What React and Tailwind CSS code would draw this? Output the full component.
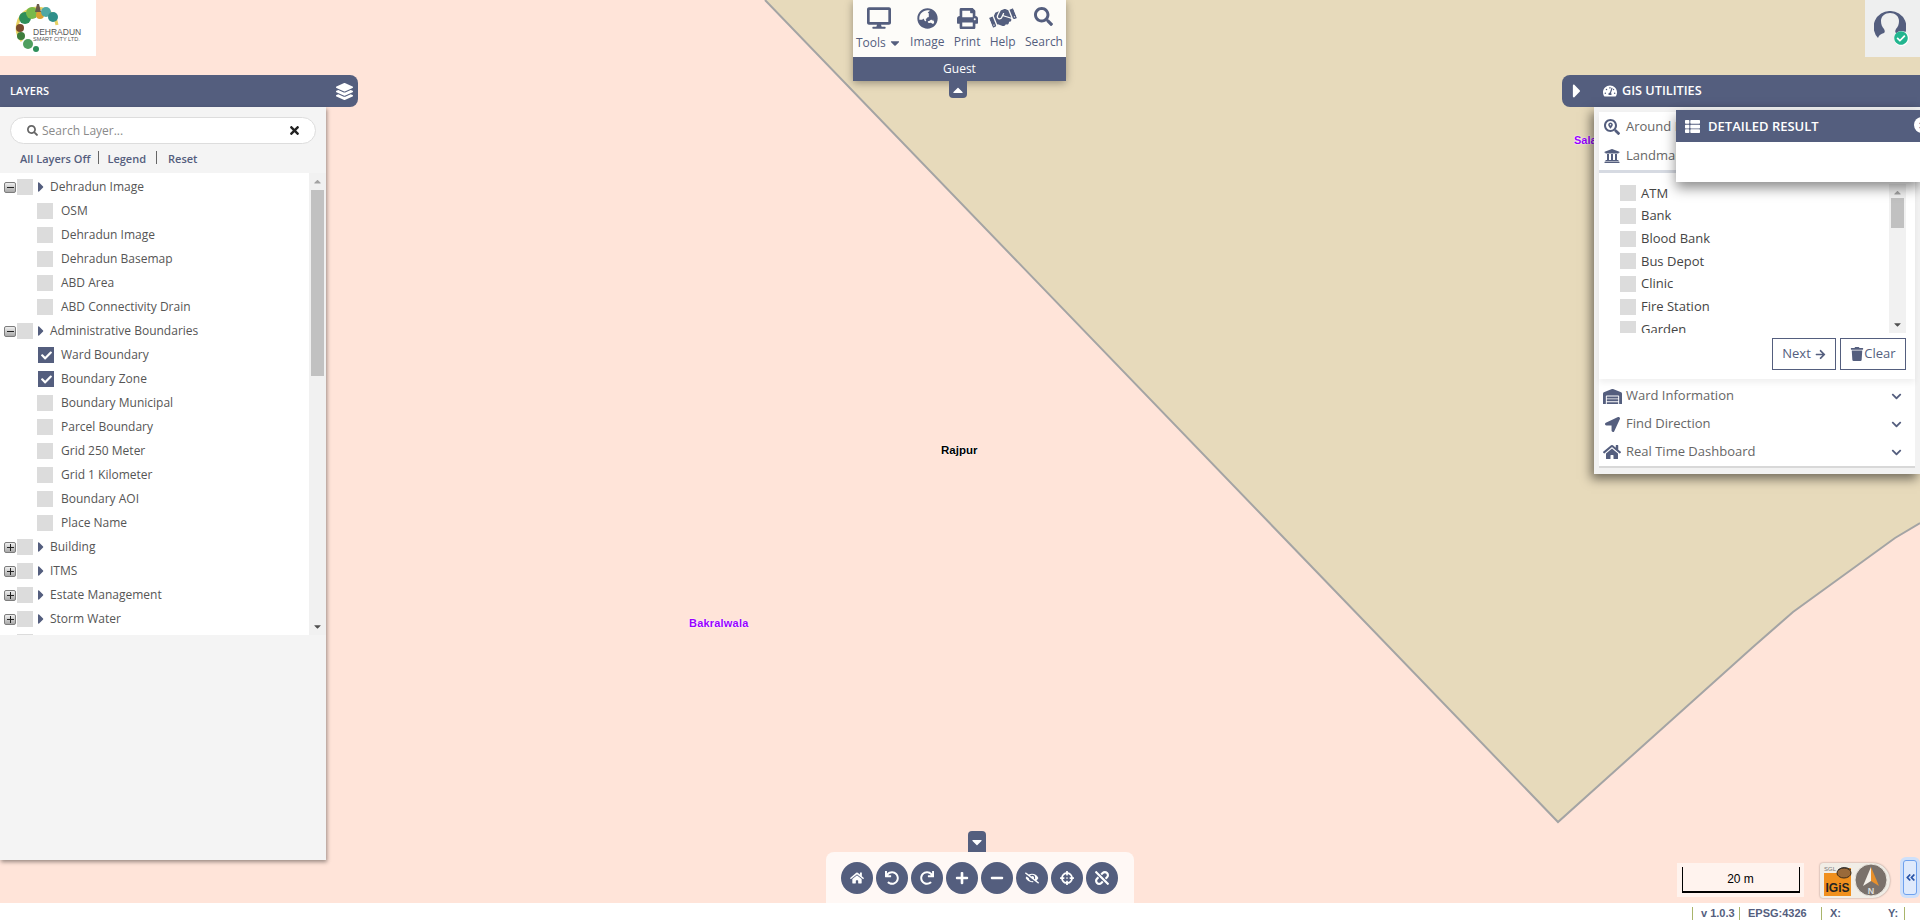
import {
  FaDesktop, FaGlobeAsia, FaPrint, FaHandshake, FaSearch, FaHome, FaUndo, FaRedo, FaPlus, FaMinus,
  FaEyeSlash, FaCrosshairs, FaUnlink, FaTachometerAlt, FaSearchLocation, FaUniversity, FaWarehouse,
  FaLocationArrow, FaArrowRight, FaTrash, FaChevronDown, FaThList, FaLayerGroup, FaCheck,
  FaAngleDoubleLeft, FaCaretRight, FaCaretDown, FaCaretUp, FaTimes, FaCheckCircle,
} from 'react-icons/fa';

const layerTree = [
  { name: 'Dehradun Image', open: true, children: [['OSM'], ['Dehradun Image'], ['Dehradun Basemap'], ['ABD Area'], ['ABD Connectivity Drain']] },
  { name: 'Administrative Boundaries', open: true, children: [['Ward Boundary', true], ['Boundary Zone', true], ['Boundary Municipal'], ['Parcel Boundary'], ['Grid 250 Meter'], ['Grid 1 Kilometer'], ['Boundary AOI'], ['Place Name']] },
  { name: 'Building' },
  { name: 'ITMS' },
  { name: 'Estate Management' },
  { name: 'Storm Water' },
];

const tools = [
  { label: 'Image', icon: FaGlobeAsia, size: 'text-[21px] mt-[8px] mb-[4px]' },
  { label: 'Print', icon: FaPrint, size: 'text-[21px] mt-[8px] mb-[4px]' },
  { label: 'Help', icon: FaHandshake, size: 'text-[26px] mt-[5px] mb-[2px] -rotate-[22deg]' },
  { label: 'Search', icon: FaSearch, size: 'text-[19px] mt-[7px] mb-[7px]' },
];

const mapButtons = [FaHome, FaUndo, FaRedo, FaPlus, FaMinus, FaEyeSlash, FaCrosshairs, FaUnlink];

const landmarks = ['ATM', 'Bank', 'Blood Bank', 'Bus Depot', 'Clinic', 'Fire Station', 'Garden'];

const utilities = [
  { label: 'Ward Information', icon: FaWarehouse, size: 'text-[19px]' },
  { label: 'Find Direction', icon: FaLocationArrow, size: 'text-[15px]' },
  { label: 'Real Time Dashboard', icon: FaHome, size: 'text-[18px]' },
];

function CheckBox({ checked }) {
  if (checked) {
    return (
      <span className="w-4 h-4 ml-px -mr-px bg-[#545e7e] flex items-center justify-center text-white text-[11px] shrink-0">
        <FaCheck />
      </span>
    );
  }
  return <span className="w-4 h-4 bg-[#dcdcdc] shrink-0" />;
}

function ExpandBox({ open }) {
  return (
    <span className="w-3 h-[11px] rounded-[2px] border border-[#7d7d7d] bg-gradient-to-b from-[#efefef] to-[#a9a9a9] flex items-center justify-center relative shrink-0">
      <span className="w-[7px] h-px bg-[#222]" />
      {!open && <span className="absolute w-px h-[7px] bg-[#222]" />}
    </span>
  );
}

function ScrollBar({ thumb }) {
  return (
    <div className="w-[17px] bg-[#f1f1f1] flex flex-col items-center shrink-0 relative">
      <FaCaretUp className="text-[#a3a3a3] text-[11px] mt-[3px] shrink-0" />
      <div className={`w-[13px] bg-[#c1c1c1] ${thumb}`} />
      <FaCaretDown className="text-[#505050] text-[11px] absolute bottom-[3px]" />
    </div>
  );
}

function LayersPanel() {
  return (
    <div className="absolute left-0 top-[75px] w-[358px] h-[785px] flex flex-col">
      <div className="h-8 bg-[#545e7e] rounded-r-lg flex items-center justify-between pl-[10px] pr-[5px] text-white text-[11px] font-semibold shrink-0">
        LAYERS
        <FaLayerGroup className="text-[17px]" />
      </div>
      <div className="w-[326px] grow bg-[#f4f4f4] shadow-[1px_2px_4px_rgba(0,0,0,0.4)] flex flex-col">
        <div className="mx-[10px] mt-[10px] h-[27px] bg-white border border-[#ddd] rounded-full flex items-center pl-4 pr-[14px] text-[12px] text-[#8a8a8a]">
          <FaSearch className="text-[11px] text-[#666] mr-[4px]" />
          <span className="grow">Search Layer...</span>
          <FaTimes className="text-[13px] text-[#222]" />
        </div>
        <div className="h-[29px] pl-5 pt-[1px] flex items-center text-[11px] font-semibold text-[#545e7e]">
          <span>All Layers Off</span>
          <span className="w-px h-[13px] bg-[#666] mx-2 -mt-[3px]" />
          <span>Legend</span>
          <span className="w-px h-[13px] bg-[#666] ml-[10px] mr-[11px] -mt-[3px]" />
          <span>Reset</span>
        </div>
        <div className="h-[462px] bg-white flex overflow-hidden">
          <div className="grow overflow-hidden pt-[2px]">
            {layerTree.map((group) => (
              <div key={group.name}>
                <div className="h-6 flex items-center pl-1 text-[12px] text-[#555]">
                  <ExpandBox open={group.open} />
                  <span className="w-4 h-4 bg-[#dcdcdc] ml-[1px] shrink-0" />
                  <FaCaretRight className="text-[#545e7e] text-[16px] mr-px shrink-0" />
                  <span className="whitespace-nowrap">{group.name}</span>
                </div>
                {group.children?.map(([name, checked]) => (
                  <div key={name} className="h-6 flex items-center pl-[37px] text-[12px] text-[#555]">
                    <CheckBox checked={checked} />
                    <span className="ml-2 whitespace-nowrap">{name}</span>
                  </div>
                ))}
              </div>
            ))}
            <div className="h-[22px] flex items-center pl-[4px]">
              <ExpandBox />
              <span className="w-4 h-4 bg-[#dcdcdc] ml-[1px]" />
            </div>
          </div>
          <ScrollBar thumb="h-[186px] mt-[3px]" />
        </div>
      </div>
    </div>
  );
}

function TopToolbar() {
  return (
    <div className="absolute left-[853px] top-0 w-[213px] flex flex-col items-start">
      <div className="w-full shadow-[0_2px_8px_rgba(0,0,0,0.35)]">
        <div className="h-[57px] bg-[#fdfcf9] flex justify-between pl-[3px] pr-[3px] text-[12px] text-[#545e7e]">
          <div className="flex flex-col items-center -mr-[1px]">
            <FaDesktop className="text-[24px] mt-[6px] mb-[4px]" />
            <span className="flex items-center gap-[2px] leading-[17px]">Tools <FaCaretDown className="text-[14px]" /></span>
          </div>
          {tools.map(({ label, icon: Icon, size }) => (
            <div key={label} className="flex flex-col items-center">
              <Icon className={size} />
              <span className="leading-[17px]">{label}</span>
            </div>
          ))}
        </div>
        <div className="h-6 bg-[#545e7e] text-white text-[12px] flex items-center justify-center">Guest</div>
      </div>
      <div className="ml-[96px] w-[18px] h-[17px] bg-[#545e7e] rounded-b-[4px] flex items-center justify-center text-white text-[16px]">
        <FaCaretUp />
      </div>
    </div>
  );
}

function UtilityRow({ icon: Icon, label, arrow, size = 'text-[16px]', height = 'h-7' }) {
  return (
    <div className={`${height} flex items-center pl-[3px] pr-[13px] text-[13px] text-[#666]`}>
      <span className="w-5 flex items-center justify-center shrink-0 text-[#545e7e]">
        <Icon className={size} />
      </span>
      <span className="ml-[4px] grow whitespace-nowrap">{label}</span>
      {arrow && <FaChevronDown className="text-[#545e7e] text-[11px]" />}
    </div>
  );
}

function UtilitiesPanel() {
  return (
    <div className="absolute right-0 top-[75px] w-[358px] flex flex-col">
      <div className="h-8 bg-[#545e7e] rounded-l-lg flex items-center pl-[4px] text-white text-[12.7px] font-semibold shrink-0">
        <FaCaretRight className="text-[22px] mr-[15px]" />
        <FaTachometerAlt className="text-[14px] mr-[5px]" />
        GIS UTILITIES
      </div>
      <div className="ml-8 bg-[#f2f2f2] px-[5px] pt-[5px] pb-[6px] shadow-[-3px_5px_10px_rgba(0,0,0,0.5)]">
        <div className="bg-white">
          <div className="shadow-[0_4px_6px_rgba(0,0,0,0.06)]">
            <UtilityRow icon={FaSearchLocation} label="Around Me" height="h-[29px]" />
            <UtilityRow icon={FaUniversity} label="Landmark" height="h-[29px]" />
            <div className="h-[3px] bg-[#d6dae2]" />
            <div className="flex h-[149px] mt-[11px] pl-[21px] pr-[9px]">
              <div className="grow -mt-[2px] overflow-hidden text-[13px] text-[#444]">
                {landmarks.map((name) => (
                  <div key={name} className="h-[22.7px] flex items-center">
                    <CheckBox />
                    <span className="ml-[5px]">{name}</span>
                  </div>
                ))}
              </div>
              <ScrollBar thumb="h-[30px]" />
            </div>
            <div className="flex justify-end gap-1 pr-[9px] pt-[5px] pb-[9px] text-[13px] text-[#545e7e]">
              <button className="w-16 h-8 border border-[#545e7e] flex items-center justify-center gap-1">
                Next <FaArrowRight className="text-[11px]" />
              </button>
              <button className="w-[66px] h-8 border border-[#545e7e] flex items-center justify-center">
                <FaTrash className="text-[14px]" />Clear
              </button>
            </div>
          </div>
          <div className="pt-[3px]">
            {utilities.map((item) => (
              <UtilityRow key={item.label} icon={item.icon} label={item.label} size={item.size} arrow />
            ))}
          </div>
          <div className="h-[2px] bg-[#d8d8d8]" />
        </div>
      </div>
    </div>
  );
}

function DetailedResult() {
  return (
    <div className="absolute right-0 top-[110px] w-[244px] h-[72px] bg-white shadow-[0_6px_12px_rgba(0,0,0,0.45)]">
      <div className="h-8 bg-[#545e7e] flex items-center pl-[9px] pt-[1px] text-white text-[13px] font-semibold relative overflow-hidden">
        <FaThList className="text-[15px] mr-[8px]" />
        DETAILED RESULT
        <span className="absolute -right-[10px] top-[7px] w-4 h-4 rounded-full bg-white flex items-center justify-center text-[#8a4a4a] text-[9px]">
          <FaTimes />
        </span>
      </div>
    </div>
  );
}

function BottomToolbar() {
  return (
    <div className="absolute left-[826px] bottom-0 w-[308px] flex flex-col items-start">
      <div className="ml-[142px] w-[18px] h-[21px] bg-[#545e7e] rounded-t-[4px] flex items-center justify-center text-white text-[16px]">
        <FaCaretDown />
      </div>
      <div className="w-full h-[51px] bg-[#fff8f5] rounded-t-lg flex items-start justify-center gap-[3.15px] pt-[10px] pr-[1px]">
        {mapButtons.map((Icon, i) => (
          <span key={i} className="w-8 h-8 rounded-full bg-[#545e7e] text-white text-[14px] flex items-center justify-center">
            <Icon />
          </span>
        ))}
      </div>
    </div>
  );
}

function CompassLogo() {
  return (
    <div className="absolute left-[1820px] top-[863px] w-[70px] h-[35px] rounded-l-[3px] rounded-r-[18px] bg-[#f1ede6] shadow-[0_0_2px_rgba(0,0,0,0.4)] flex items-center">
      <svg width="30" height="17" viewBox="0 0 30 17" className="absolute left-[3px] top-[2px]">
        <rect x="1" y="8" width="27" height="9" fill="#f0901e" />
        <rect x="17" y="3" width="11" height="6" fill="#f0901e" />
        <ellipse cx="21" cy="8" rx="7" ry="5" fill="#9a6a3a" stroke="#3b2a1a" />
        <path d="M15 5 Q21 0 28 5" fill="none" stroke="#333" />
      </svg>
      <span className="absolute left-[4px] top-[3px] text-[6px] leading-none text-[#777] font-['Liberation_Sans',sans-serif]">SGL</span>
      <div className="absolute left-[4px] top-[17px] w-[27px] h-4 bg-[#f0901e] text-[12px] font-bold leading-4 text-[#222] font-['Liberation_Sans',sans-serif] text-center">IGiS</div>
      <svg width="34" height="34" viewBox="0 0 34 34" className="absolute left-[34px] top-0">
        <circle cx="17" cy="17" r="16" fill="#7a716b" stroke="#e9e5de" />
        <path d="M17 4 L25 23 L17 18 Z" fill="#e8902b" />
        <path d="M17 4 L9 23 L17 18 Z" fill="#f4f0ea" />
        <text x="17" y="31" textAnchor="middle" fontSize="9" fontWeight="700" fill="#ddd" fontFamily="Liberation Sans">N</text>
      </svg>
    </div>
  );
}

function DscLogo() {
  return (
    <div className="absolute left-0 top-0 w-24 h-14 bg-white flex items-center pl-[15px]">
      <svg width="48" height="50" viewBox="0 0 48 50" className="shrink-0 -mr-[30px]">
        <path d="M7 38 A20 20 0 1 1 42 22" fill="none" stroke="#e8d263" strokeWidth="3" />
        <circle cx="10" cy="15" r="6" fill="#2e8f5a" />
        <circle cx="17" cy="10" r="6" fill="#79b94a" />
        <circle cx="25" cy="12" r="4" fill="#d9a030" />
        <circle cx="31" cy="9" r="5" fill="#4fa8a4" />
        <circle cx="38" cy="14" r="5" fill="#2f8f8a" />
        <circle cx="5" cy="25" r="4" fill="#7a4a2c" />
        <circle cx="6" cy="33" r="4" fill="#3d7d3d" />
        <circle cx="13" cy="41" r="5" fill="#4f9f5f" />
        <circle cx="21" cy="46" r="3" fill="#2e8f5a" />
        <path d="M22 1 L24 1 L26 9 L20 9 Z" fill="#6a5a4a" />
      </svg>
      <div className="text-[#555] leading-none font-['Liberation_Sans',sans-serif] mt-[15px] relative">
        <div className="text-[8.5px]">DEHRADUN</div>
        <div className="text-[5.6px] mt-[1px] whitespace-nowrap">SMART CITY LTD.</div>
      </div>
    </div>
  );
}

function UserAvatar() {
  return (
    <div className="absolute right-0 top-0 w-[55px] h-[57px] bg-[#eeefef] flex items-center justify-center">
      <div className="relative w-8 h-8 -ml-[6px] -mt-[4px]">
        <svg viewBox="0 0 32 32" className="w-8 h-8">
          <path fillRule="evenodd" fill="#545e7e" d="M16 0a16 16 0 0 0-12 27c1-3 3-4 6-5 1-1 1-2 0-4-2-2-3-5-3-8 0-5 4-8 9-8s9 3 9 8c0 3-1 6-3 8-1 2-1 3 0 4 3 1 5 2 6 5A16 16 0 0 0 16 0z" />
        </svg>
        <span className="absolute -right-[3px] -bottom-[3px] w-[15px] h-[15px] rounded-full bg-white flex items-center justify-center">
          <FaCheckCircle className="text-[#22b58f] text-[14px]" />
        </span>
      </div>
    </div>
  );
}

function StatusBar() {
  return (
    <div className="h-[21px] bg-white flex items-center justify-end text-[#545e7e] text-[11px] font-bold font-['Liberation_Sans',sans-serif] shrink-0 relative">
      <span className="h-[13px] w-[47px] border-l border-[#a9b56b] pl-2 leading-[13px] whitespace-nowrap">v 1.0.3</span>
      <span className="h-[13px] w-[82px] border-l border-[#a9b56b] pl-2 leading-[13px]">EPSG:4326</span>
      <span className="h-[13px] w-[67px] border-l border-[#a9b56b] pl-2 leading-[13px]">X:</span>
      <span className="h-[13px] w-[16px] leading-[13px]">Y:</span>
      <span className="h-[13px] border-l border-[#a9b56b] w-[16px]" />
    </div>
  );
}

export default function App() {
  return (
    <div className="h-[924px] w-[1920px] flex flex-col overflow-hidden font-['Open_Sans',sans-serif]">
      <div className="grow relative overflow-hidden bg-[#ffe4d9]">
        {/* Map */}
        <svg className="absolute inset-0" width="1920" height="903">
          <path d="M765 0 L1558 822 L1753 647 L1793 612 L1895 538 L1920 523 L1920 0 Z" fill="#e7dabb" />
          <path d="M765 0 L1558 822 L1753 647 L1793 612 L1895 538 L1920 523" fill="none" stroke="#a4a4a4" strokeWidth="2" />
        </svg>
        <span className="absolute left-[941px] top-[442px] text-[11.5px] font-bold text-black font-['Liberation_Sans',sans-serif] [text-shadow:0_0_2px_#fff,0_0_1px_#fff]">Rajpur</span>
        <span className="absolute left-[689px] top-[615px] text-[11px] tracking-[0.2px] font-bold text-[#9a00ff] font-['Liberation_Sans',sans-serif] [text-shadow:0_0_2px_#fff,0_0_1px_#fff]">Bakralwala</span>
        <span className="absolute left-[1574px] top-[132px] text-[11px] font-bold text-[#9a00ff] font-['Liberation_Sans',sans-serif] [text-shadow:0_0_2px_#fff,0_0_1px_#fff]">Salawala</span>

        <DscLogo />
        <UserAvatar />
        <TopToolbar />
        <LayersPanel />
        <UtilitiesPanel />
        <DetailedResult />
        <BottomToolbar />

        {/* Scale */}
        <div className="absolute left-[1677px] top-[863px] w-[127px] h-[34px] bg-[#fff3ee] flex items-end justify-center">
          <div className="w-[118px] h-[26px] mb-[4px] border-x border-b-2 border-black flex items-center justify-center text-[12px] text-black font-['Liberation_Sans',sans-serif]">20 m</div>
        </div>
        <CompassLogo />
        <div className="absolute right-[3px] top-[860px] w-[14px] h-[35px] rounded-[3px] bg-[#dfeafc] border border-[#6ea1ee] shadow-[0_0_0_3px_#cfe0fa] flex items-center justify-center text-[#2a55a8] text-[11px]">
          <FaAngleDoubleLeft />
        </div>
      </div>
      <StatusBar />
    </div>
  );
}
